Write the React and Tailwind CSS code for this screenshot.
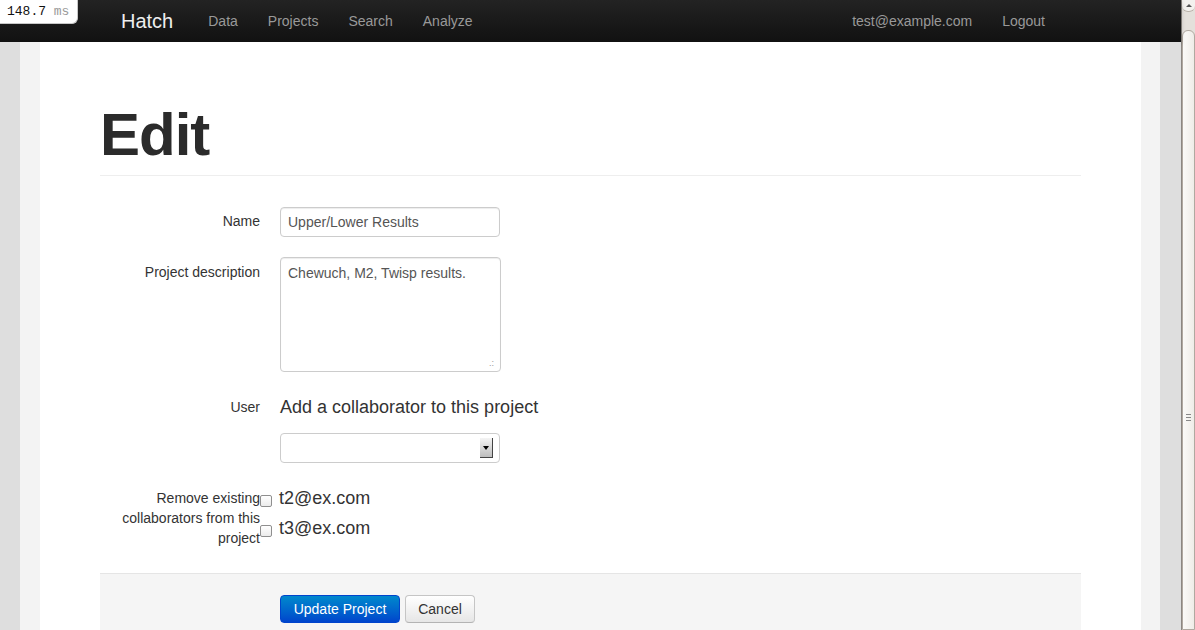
import React from "react";

const NAV = ["Data", "Projects", "Search", "Analyze"];

function Field({ label, children, labelPad = "pt-[5px]", className = "" }) {
  return (
    <div className={`flex ${className}`}>
      <div className={`w-[160px] shrink-0 text-right text-[14px] leading-[20px] text-[#333] ${labelPad}`}>{label}</div>
      <div className="ml-[20px] flex-1">{children}</div>
    </div>
  );
}

function Check({ label }) {
  return (
    <div className="flex h-[30px] items-start">
      <span className="-ml-[20px] mr-[7px] mt-[12px] h-[12px] w-[12px] rounded-[2px] border border-[#8f8f8f] bg-gradient-to-b from-white to-[#ececec]" />
      <span className="text-[18px] leading-[30px] text-[#333]">{label}</span>
    </div>
  );
}

export default function App() {
  return (
    <div className="flex h-[630px] w-[1195px] overflow-hidden bg-white font-['Liberation_Sans',Arial,sans-serif]">
      <div className="relative flex w-[1181px] flex-col">
        {/* top bar */}
        <div className="flex h-[42px] shrink-0 items-center bg-gradient-to-b from-[#232323] to-[#111] pl-[101px] pr-[121px] shadow-[0_1px_4px_rgba(0,0,0,0.25)]">
          <span className="px-[20px] text-[20px] text-[#eee]">Hatch</span>
          {NAV.map((n) => (
            <span key={n} className="px-[15px] text-[14px] text-[#999]">
              {n}
            </span>
          ))}
          <div className="ml-auto flex">
            <span className="px-[15px] text-[14px] text-[#999]">test@example.com</span>
            <span className="px-[15px] text-[14px] text-[#999]">Logout</span>
          </div>
        </div>

        {/* timing badge */}
        <div className="absolute left-0 top-0 flex h-[24px] w-[78px] items-center rounded-br-[6px] border-b border-r border-[#c8c8c8] bg-white pl-[7px] font-['Liberation_Mono',monospace] text-[13px] text-[#111]">
          148.7&nbsp;<span className="text-[#999]">ms</span>
        </div>

        <div className="flex flex-1">
          <div className="w-[20px] bg-[#dedede]" />
          <div className="w-[20px] bg-[#f3f3f3]" />
          <div className="flex-1 bg-white px-[60px] pt-[63px]">
            <h1 className="border-b border-[#eee] pb-[10px] text-[60px] font-bold leading-none tracking-[-1px] text-[#2b2b2b]">
              Edit
            </h1>

            <Field label="Name" labelPad="pt-[4px]" className="mt-[31px]">
              <div className="flex h-[30px] w-[220px] items-center rounded-[4px] border border-[#ccc] px-[7px] text-[14px] text-[#555] shadow-[inset_0_1px_1px_rgba(0,0,0,0.075)]">
                Upper/Lower Results
              </div>
            </Field>

            <Field label="Project description" className="mt-[20px]">
              <div className="relative h-[115px] w-[221px] rounded-[4px] border border-[#ccc] px-[7px] pt-[5px] text-[14px] leading-[20px] text-[#555] shadow-[inset_0_1px_1px_rgba(0,0,0,0.075)]">
                Chewuch, M2, Twisp results.
                <span className="absolute bottom-[3px] right-[6px] text-[9px] leading-none text-[#999]">.:</span>
              </div>
            </Field>

            <Field label="User" className="mt-[20px]">
              <div className="text-[18px] leading-[30px] text-[#333]">Add a collaborator to this project</div>
              <div className="mt-[11px] flex h-[30px] w-[220px] items-center justify-end rounded-[4px] border border-[#ccc] bg-white pr-[6px]">
                <div className="flex h-[20px] w-[13px] items-center justify-center border-r border-b border-[#444] bg-gradient-to-b from-[#f4f4f4] to-[#bdbdbd]">
                  <span className="h-0 w-0 border-x-[3px] border-t-[4px] border-x-transparent border-t-black" />
                </div>
              </div>
            </Field>

            <Field label={<>Remove existing<br />collaborators from this<br />project</>} className="mt-[20px]">
              <Check label="t2@ex.com" />
              <Check label="t3@ex.com" />
            </Field>

            <div className="mt-[25px] h-[200px] border-t border-[#e5e5e5] bg-[#f5f5f5] pl-[180px] pt-[21px]">
              <div className="flex gap-[5px]">
                <button className="h-[28px] w-[120px] rounded-[4px] border border-[#0044cc] bg-gradient-to-b from-[#0088cc] to-[#0044cc] text-[14px] text-white">
                  Update Project
                </button>
                <button className="h-[28px] w-[70px] rounded-[4px] border border-[#c5c5c5] border-b-[#b3b3b3] bg-gradient-to-b from-white to-[#e6e6e6] text-[14px] text-[#333]">
                  Cancel
                </button>
              </div>
            </div>
          </div>
          <div className="w-[19px] bg-[#f3f3f3]" />
          <div className="w-[21px] bg-[#dedede]" />
        </div>
      </div>

      {/* scrollbar */}
      <div className="flex w-[14px] flex-col border-l border-[#8c8782] bg-[#e4e0db]">
        <div className="flex h-[12px] items-center justify-center rounded-b-[6px] border-b border-[#b8b0a8] bg-[#f3f1ee]">
          <span className="h-0 w-0 border-x-[3px] border-b-[3px] border-x-transparent border-b-[#555]" />
        </div>
        <div className="mt-[18px] flex flex-1 flex-col items-center rounded-t-[6px] border border-[#b0a8a0] bg-gradient-to-r from-[#fbfaf8] to-[#efece8]">
          <div className="mt-[383px] flex flex-col gap-[2px]">
            <span className="h-px w-[5px] bg-[#888]" />
            <span className="h-px w-[5px] bg-[#888]" />
            <span className="h-px w-[5px] bg-[#888]" />
          </div>
        </div>
      </div>
    </div>
  );
}
